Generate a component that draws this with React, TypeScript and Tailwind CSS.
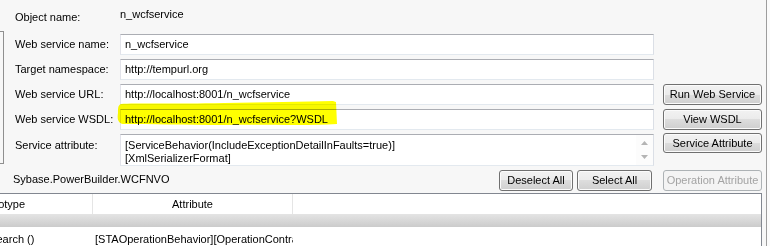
import React from "react";

function Btn({
  children,
  className = "",
  disabled = false,
}: {
  children: React.ReactNode;
  className?: string;
  disabled?: boolean;
}) {
  return disabled ? (
    <div
      className={`flex items-center justify-center rounded-[3px] border border-[#adb2b5] bg-[#f4f4f4] text-[#a3a3a3] ${className}`}
    >
      {children}
    </div>
  ) : (
    <div
      className={`flex items-center justify-center rounded-[3px] border border-[#707070] bg-[linear-gradient(to_bottom,#f2f2f2_0%,#ebebeb_50%,#dddddd_50%,#cfcfcf_100%)] shadow-[inset_0_0_0_1px_#fbfbfb] text-black ${className}`}
    >
      {children}
    </div>
  );
}

function Field({ children }: { children?: React.ReactNode }) {
  return (
    <div className="h-[21px] w-[534px] flex items-center border border-t-[#abadb3] border-l-[#e2e3ea] border-r-[#dbdfe6] border-b-[#e3e9ef] bg-white pl-[4px] leading-[13px] whitespace-nowrap overflow-hidden">
      {children}
    </div>
  );
}

function Row({
  label,
  value,
  button,
}: {
  label: string;
  value: string;
  button?: string;
}) {
  return (
    <div className="flex items-center h-[21px]">
      <div className="w-[105px] leading-[13px]">{label}</div>
      <Field>{value}</Field>
      {button ? <Btn className="ml-[9px] w-[99px] h-[21px]">{button}</Btn> : null}
    </div>
  );
}

export default function App() {
  return (
    <div className="relative flex w-[770px] h-[246px] overflow-hidden bg-[#fbfbfb] font-['Liberation_Sans',Arial,sans-serif] text-[11px] text-black">
      <div className="w-[767px] h-[246px] flex flex-col bg-[#f7f7f7] border-r border-[#9d9d9d]">
        {/* top form */}
        <div className="flex">
          <div className="w-[4px] mt-[31px] h-[133px] border-t border-r border-b border-[#8f8f8f]" />
          <div className="ml-[11px] flex flex-col">
            <div className="flex h-[34px]">
              <div className="w-[105px] pt-[11px] leading-[13px]">Object name:</div>
              <div className="pt-[8px] leading-[13px]">n_wcfservice</div>
            </div>
            <div className="flex flex-col gap-[4px]">
              <Row label="Web service name:" value="n_wcfservice" />
              <Row label="Target namespace:" value="http://tempurl.org" />
              <Row
                label="Web service URL:"
                value="http://localhost:8001/n_wcfservice"
                button="Run Web Service"
              />
              <Row
                label="Web service WSDL:"
                value="http://localhost:8001/n_wcfservice?WSDL"
                button="View WSDL"
              />
              <div className="flex items-start h-[32px]">
                <div className="w-[105px] pt-[5px] leading-[13px]">Service attribute:</div>
                <div className="h-[32px] w-[534px] flex border border-t-[#abadb3] border-l-[#e2e3ea] border-r-[#dbdfe6] border-b-[#e3e9ef] bg-white overflow-hidden">
                  <div className="flex-1 pl-[4px] pt-[4px] leading-[13px] whitespace-nowrap overflow-hidden">
                    <div>[ServiceBehavior(IncludeExceptionDetailInFaults=true)]</div>
                    <div>[XmlSerializerFormat]</div>
                  </div>
                  <div className="w-[17px] flex flex-col items-center justify-between py-[6px] bg-[#fcfcfc]">
                    <svg width="7" height="4" viewBox="0 0 7 4">
                      <path d="M0 4 L3.5 0 L7 4 Z" fill="#b4b4b4" />
                    </svg>
                    <svg width="7" height="4" viewBox="0 0 7 4">
                      <path d="M0 0 L3.5 4 L7 0 Z" fill="#b4b4b4" />
                    </svg>
                  </div>
                </div>
                <Btn className="ml-[9px] w-[99px] h-[20px] -mt-[1px]">Service Attribute</Btn>
              </div>
            </div>
          </div>
        </div>

        {/* bottom button row */}
        <div className="flex items-start mt-[4px] h-[21px] pr-[4px]">
          <div className="flex-1 pl-[13px] pt-[3px] leading-[13px]">Sybase.PowerBuilder.WCFNVO</div>
          <Btn className="w-[74px] h-[21px]">Deselect All</Btn>
          <Btn className="ml-[4px] w-[75px] h-[21px]">Select All</Btn>
          <Btn disabled className="ml-[11px] w-[99px] h-[21px]">Operation Attribute</Btn>
        </div>

        {/* list */}
        <div className="mt-[2px] w-[762px] flex-1 border-t border-r border-[#828790] bg-white overflow-hidden">
          <div className="flex h-[20px] bg-white">
            <div className="w-[93px] flex items-center border-r border-[#e5e5e5] overflow-hidden whitespace-nowrap leading-[13px]">
              <span className="-ml-[22px]">Prototype</span>
            </div>
            <div className="w-[200px] flex items-center justify-center border-r border-[#e5e5e5] leading-[13px]">
              Attribute
            </div>
            <div className="flex-1" />
          </div>
          <div className="h-[13px] bg-[linear-gradient(to_bottom,#e4e4e4,#cbcbcb)]" />
          <div className="flex pt-[6px] leading-[13px] whitespace-nowrap">
            <div className="w-[93px] overflow-hidden">
              <span className="block -ml-[9px]">search ()</span>
            </div>
            <div className="w-[200px] pl-[2px] overflow-hidden">
              [STAOperationBehavior][OperationContract]
            </div>
          </div>
        </div>
      </div>
      <div className="flex-1" />

      {/* yellow highlighter mark over the WSDL field */}
      <svg
        className="absolute left-[114px] top-[99px] mix-blend-multiply pointer-events-none"
        width="226"
        height="30"
        viewBox="0 0 226 30"
      >
        <path
          d="M7 5 C20 4 60 5 110 4 C150 3 190 3 219 2 L222 3 L223 25 C190 27 150 25 110 26 C70 26 35 25 9 25 C4 24 3 20 4 14 C4 9 4 6 7 5 Z"
          fill="#ffff00"
        />
      </svg>
    </div>
  );
}
